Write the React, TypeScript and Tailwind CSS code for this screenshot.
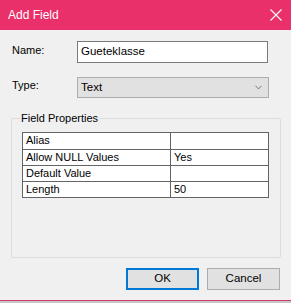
import { ChevronDown } from "lucide-react";

const ROWS = [
  { name: "Alias", value: "" },
  { name: "Allow NULL Values", value: "Yes" },
  { name: "Default Value", value: "" },
  { name: "Length", value: "50" },
];

export default function App() {
  return (
    <div className="w-[291px] h-[303px] bg-[#f0f0f0] flex flex-col overflow-hidden font-['Liberation_Sans',Arial,sans-serif] text-[11px] text-black">
      {/* title bar */}
      <div className="h-[30px] shrink-0 bg-[#e9306a] flex items-center justify-between pl-[8px] pr-[9px]">
        <span className="text-white text-[12px] leading-none">Add Field</span>
        <svg width="12" height="12" viewBox="0 0 12 12" className="text-white">
          <path d="M0.5 0.5 L11.5 11.5 M11.5 0.5 L0.5 11.5" stroke="currentColor" strokeWidth="1.1" />
        </svg>
      </div>

      <div className="flex-1 flex flex-col">
        <div className="flex items-center mt-[11px]">
          <span className="w-[77px] pl-[12px] -mt-[4px]">Name:</span>
          <div className="w-[191px] h-[22px] bg-white border border-[#7a7a7a] flex items-center px-[3px] text-[11.5px]">
            Gueteklasse
          </div>
        </div>

        <div className="flex items-center mt-[14px]">
          <span className="w-[77px] pl-[12px] -mt-[4px]">Type:</span>
          <div className="w-[192px] h-[21px] bg-[#e1e1e1] border border-[#adadad] flex items-center justify-between pl-[3px] pr-[4px] text-[11.5px]">
            <span>Text</span>
            <ChevronDown size={11} strokeWidth={1.5} className="text-[#444]" />
          </div>
        </div>

        <div className="relative mt-[20px] ml-[11px] w-[270px] h-[140px] border border-[#dcdcdc] rounded-[2px] pt-[13px] pl-[10px]">
          <span className="absolute -top-[8px] left-[8px] px-[1px] bg-[#f0f0f0] leading-[14px]">
            Field Properties
          </span>
          <div className="w-[247px] border border-[#646464] bg-white">
            {ROWS.map((row, i) => (
              <div
                key={row.name}
                className={`flex h-[16px] leading-[15px] ${i > 0 ? "border-t border-[#646464]" : ""}`}
              >
                <div className="w-[148px] border-r border-[#646464] pl-[3px]">{row.name}</div>
                <div className="flex-1 pl-[3px]">{row.value}</div>
              </div>
            ))}
          </div>
        </div>

        <div className="flex justify-end gap-[8px] mt-[10px] pr-[11px]">
          <button className="w-[73px] h-[22px] bg-[#e1e1e1] border-2 border-[#0078d7] text-[11.5px]">
            OK
          </button>
          <button className="w-[73px] h-[22px] bg-[#e1e1e1] border border-[#adadad] text-[11.5px]">
            Cancel
          </button>
        </div>
      </div>

      <div className="h-[1px] shrink-0 bg-[#d23a6e]" />
      <div className="h-[2px] shrink-0 bg-[#c8c8c8]" />
    </div>
  );
}
